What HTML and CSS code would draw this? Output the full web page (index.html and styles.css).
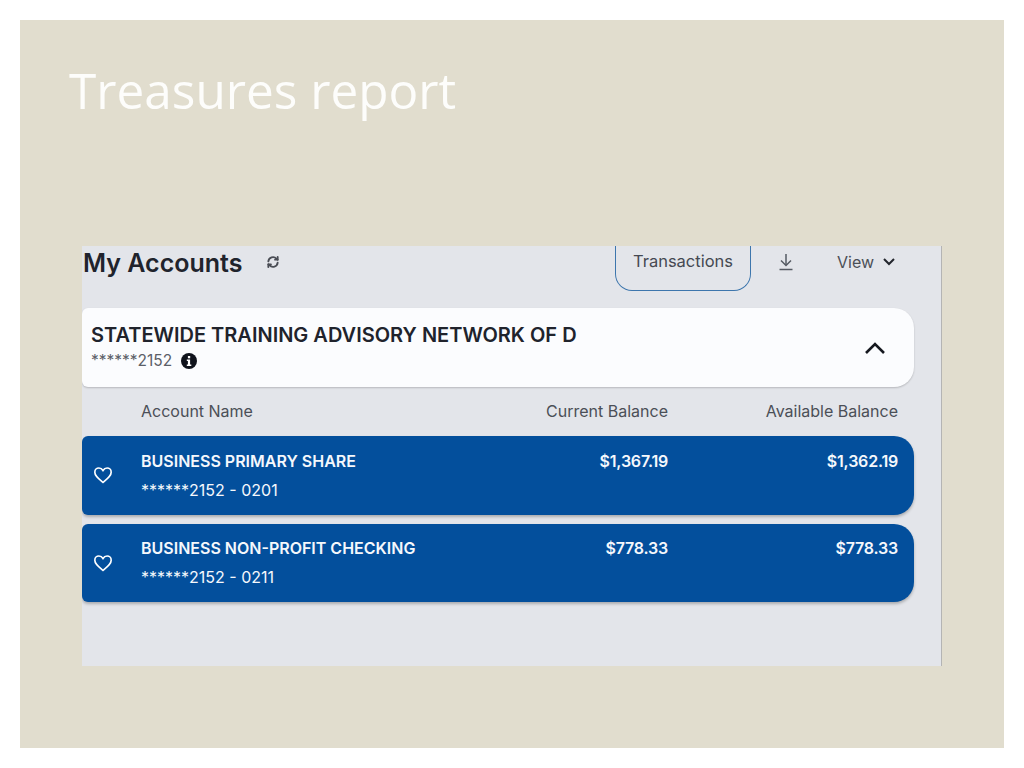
FILE: index.html
```html
<!DOCTYPE html>
<html lang="en">
  <head>
    <meta charset="UTF-8" />
    <meta name="viewport" content="width=device-width, initial-scale=1.0" />
    <title>Treasures report</title>
    <link rel="stylesheet" href="styles.css">
  </head>
  <body>
    <div class="slide">
      <h1 class="slide-title">Treasures report</h1>
      <div class="panel">
        <div class="toolbar">
          <h2>My Accounts</h2>
          <svg class="refresh-icon" viewBox="0 0 24 24" fill="none" stroke="#4a4d55" stroke-width="3.200" stroke-linecap="round" stroke-linejoin="round">
            <path d="M4 11a8 8 0 0 1 14-4.500L20 8" />
            <path d="M20 3.500V8h-4.500" />
            <path d="M20 13a8 8 0 0 1-14 4.500L4 16" />
            <path d="M4 20.500V16h4.500" />
          </svg>
          <button class="transactions-btn">Transactions</button>
          <svg class="download-icon" viewBox="0 0 16 18" fill="none" stroke="#555a63" stroke-width="1.500">
            <path d="M8 1v11" />
            <path d="M3 7.500l5 5 5-5" />
            <path d="M1.500 16.500h13" />
          </svg>
          <div class="view-menu">
            View
            <svg viewBox="0 0 14 10" fill="none" stroke="#23262d" stroke-width="2">
              <path d="M2 2l5 5 5-5" />
            </svg>
          </div>
        </div>

        <div class="group-card">
          <div>
            <div class="group-name">STATEWIDE TRAINING ADVISORY NETWORK OF D</div>
            <div class="group-number">
              ******2152
              <svg class="info-icon" viewBox="0 0 16 16">
                <circle cx="8" cy="8" r="8" fill="#10131c" />
                <rect x="6.900" y="3" width="2.300" height="2.300" fill="#fff" />
                <path d="M5.800 6.600h3.300v5h1.200v1.500H5.800v-1.500h1.100V8.100H5.800z" fill="#fff" />
              </svg>
            </div>
          </div>
          <svg class="collapse-icon" viewBox="0 0 22 14" fill="none" stroke="#15181f" stroke-width="2.600">
            <path d="M2 12l9-9 9 9" />
          </svg>
        </div>

        <div class="account-grid account-head">
          <div></div>
          <div>Account Name</div>
          <div class="amount">Current Balance</div>
          <div class="amount">Available Balance</div>
        </div>

        <div class="account-grid account-row">
          <svg class="heart-icon" viewBox="0 0 24 22" fill="none" stroke="#fff" stroke-width="2">
            <path d="M12 20C6 15 2 12 2 7.500 2 4.500 4.300 2.500 7 2.500c2 0 3.800 1 5 3 1.200-2 3-3 5-3 2.700 0 5 2 5 5C22 12 18 15 12 20z" />
          </svg>
          <div>
            <div class="account-name">BUSINESS PRIMARY SHARE</div>
            <div class="account-number">******2152 - 0201</div>
          </div>
          <div class="amount balance">$1,367.19</div>
          <div class="amount balance">$1,362.19</div>
        </div>

        <div class="account-grid account-row">
          <svg class="heart-icon" viewBox="0 0 24 22" fill="none" stroke="#fff" stroke-width="2">
            <path d="M12 20C6 15 2 12 2 7.500 2 4.500 4.300 2.500 7 2.500c2 0 3.800 1 5 3 1.200-2 3-3 5-3 2.700 0 5 2 5 5C22 12 18 15 12 20z" />
          </svg>
          <div>
            <div class="account-name">BUSINESS NON-PROFIT CHECKING</div>
            <div class="account-number">******2152 - 0211</div>
          </div>
          <div class="amount balance">$778.33</div>
          <div class="amount balance">$778.33</div>
        </div>
      </div>
    </div>
  </body>
</html>
```

FILE: styles.css
```css
body {
  margin: 0;
  padding: 20px;
  background-color: #fff;
  font-family: "Inter", "Liberation Sans", sans-serif;
}

.slide {
  width: 984px;
  height: 728px;
  padding: 0 62px;
  box-sizing: border-box;
  background-color: #e1ddce;
}

.slide-title {
  margin: 0;
  height: 226px;
  padding-top: 36px;
  box-sizing: border-box;
  color: #fdfdfb;
  font-family: "Open Sans", sans-serif;
  font-size: 49.500px;
  font-weight: 400;
  line-height: 68px;
  text-indent: -13px;
}

.panel {
  width: 860px;
  height: 420px;
  box-sizing: border-box;
  background-color: #e3e5ea;
  border-right: 1px solid #b4b4b4;
  overflow: hidden;
}

.toolbar {
  display: flex;
  align-items: flex-start;
  height: 62px;
  color: #4b4f57;
}

.toolbar h2 {
  margin: 0;
  padding: 2px 0 0 1px;
  width: 183px;
  color: #20232c;
  font-size: 25px;
  font-weight: 600;
  line-height: 30px;
}

.refresh-icon {
  width: 14px;
  height: 14px;
  margin-top: 9px;
}

.transactions-btn {
  width: 136px;
  height: 45px;
  margin-left: 335px;
  padding: 0 0 14px;
  box-sizing: border-box;
  background: none;
  border: 1px solid #3d76ad;
  border-top: none;
  border-radius: 0 0 17px 17px;
  color: #454952;
  font-family: inherit;
  font-size: 16.500px;
  line-height: 30px;
}

.download-icon {
  width: 16px;
  height: 18px;
  margin: 7px 0 0 27px;
}

.view-menu {
  display: flex;
  align-items: center;
  gap: 8px;
  margin-left: 43px;
  height: 32px;
  font-size: 16px;
}

.view-menu svg {
  width: 14px;
  height: 10px;
}

.group-card {
  display: flex;
  justify-content: space-between;
  align-items: center;
  width: 832px;
  height: 79px;
  padding: 0 28px 0 9px;
  box-sizing: border-box;
  background-color: #fbfcfe;
  border-radius: 6px 20px 20px 6px;
  box-shadow: 0 1px 2px rgba(0, 0, 0, 0.2);
}

.group-name {
  color: #20232c;
  font-size: 20px;
  font-weight: 600;
  line-height: 26px;
}

.group-number {
  display: flex;
  align-items: center;
  gap: 9px;
  margin-top: 1px;
  color: #5b5f68;
  font-size: 15.500px;
  line-height: 24px;
}

.info-icon {
  width: 16px;
  height: 16px;
}

.collapse-icon {
  width: 22px;
  height: 14px;
}

.account-grid {
  display: grid;
  grid-template-columns: 59px 1fr 150px 230px;
  align-items: center;
  width: 832px;
  padding-right: 16px;
  box-sizing: border-box;
}

.account-head {
  height: 49px;
  padding-bottom: 2px;
  color: #4b4f57;
  font-size: 16px;
}

.amount {
  text-align: right;
}

.account-row {
  height: 78.500px;
  margin-bottom: 9px;
  background-color: #034f9c;
  border-radius: 6px 20px 20px 6px;
  box-shadow: 0 2px 3px rgba(0, 0, 0, 0.25);
  color: #f5f8fc;
}

.heart-icon {
  width: 20px;
  height: 18px;
  margin-left: 11px;
}

.account-name {
  margin-top: -0.500px;
  font-size: 16px;
  font-weight: 600;
  line-height: 24px;
}

.account-number {
  margin-top: 5px;
  font-size: 16px;
  line-height: 24px;
}

.balance {
  align-self: start;
  padding-top: 12.500px;
  font-size: 16px;
  font-weight: 600;
  letter-spacing: -0.200px;
  line-height: 24px;
}
```
